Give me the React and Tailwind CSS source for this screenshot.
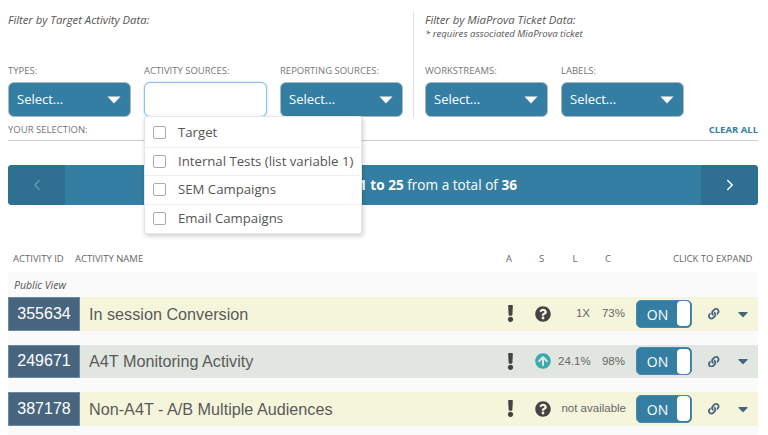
import React from "react";
import { FaExclamation, FaQuestionCircle, FaArrowCircleUp, FaLink, FaCaretDown } from "react-icons/fa";
import { ChevronLeft, ChevronRight } from "lucide-react";

const Caret = () => (
  <svg width="14" height="8" viewBox="0 0 14 8" className="block"><path d="M0.5 0.5h13L7 7.5z" fill="#fff" /></svg>
);

function Select({ label }) {
  return (
    <div className="w-[123px] shrink-0">
      <div className="h-[19px] text-[9.5px] leading-[16px] text-[#777] whitespace-nowrap">{label}</div>
      <div className="h-[35px] rounded-[6px] bg-[#357ea3] border border-[#a9b9c2] flex items-center justify-between pl-[8px] pr-[9px] text-white text-[13px]">
        <span className="pt-[1px]">Select...</span>
        <Caret />
      </div>
    </div>
  );
}

function OpenSelect({ label }) {
  return (
    <div className="w-[123px] shrink-0 relative">
      <div className="h-[19px] text-[9.5px] leading-[16px] text-[#777] whitespace-nowrap">{label}</div>
      <div className="h-[35px] rounded-[6px] bg-white border border-[#8fc0ea] shadow-[0_0_2px_rgba(90,160,220,0.6)]" />
      <div className="absolute z-10 left-0 top-[53px] w-[218px] pt-[2px] bg-white border border-[#e6e6e6] rounded-[2px] shadow-[1px_2px_5px_rgba(0,0,0,0.2)] text-[13.2px] text-[#555]">
        {["Target", "Internal Tests (list variable 1)", "SEM Campaigns", "Email Campaigns"].map((t, i) => (
          <div key={t} className={`h-[28.5px] flex items-center pl-[8px] whitespace-nowrap ${i < 3 ? "border-b border-[#efefef]" : ""}`}>
            <span className="w-[13px] h-[13px] border border-[#aaa] rounded-[2px] mr-[12px] shrink-0" />
            <span className="pt-[1px]">{t}</span>
          </div>
        ))}
      </div>
    </div>
  );
}

function Row({ id, name, bg, icon, l, c, mt = "" }) {
  return (
    <div className={`flex items-center h-[33.5px] ${bg} ${mt}`} style={{ fontFamily: '"Liberation Sans", sans-serif' }}>
      <div className="w-[72px] h-full bg-[#47657f] text-white text-[16px] flex items-center justify-center border border-[#6d8aa0]">{id}</div>
      <div className="w-[412px] pl-[9px] text-[16.2px] text-[#5a5a5a] whitespace-nowrap">{name}</div>
      <div className="w-[36px] flex justify-center"><FaExclamation className="text-[#444] text-[17px]" /></div>
      <div className="w-[30px] flex justify-center">
        {icon === "up"
          ? <FaArrowCircleUp className="text-[#3aa9b0] text-[16px]" />
          : <FaQuestionCircle className="text-[#444] text-[16px]" />}
      </div>
      {c ? (
        <>
          <div className="w-[32px] text-right text-[11.5px] text-[#666] whitespace-nowrap">{l}</div>
          <div className="w-[35px] text-right text-[11.5px] text-[#666]">{c}</div>
          <div className="w-[1px]" />
        </>
      ) : (
        <div className="w-[68px] text-right text-[11.5px] text-[#666] whitespace-nowrap">{l}</div>
      )}
      <div className="ml-[10px] w-[56px] h-[28px] rounded-[5px] bg-[#357ea3] border border-[#4d87ad] flex items-center overflow-hidden">
        <span className="flex-1 text-center text-white text-[14px] pl-[1px] pt-[1px]" style={{ fontFamily: '"Open Sans", sans-serif' }}>ON</span>
        <span className="w-[13px] h-[25px] bg-white rounded-[4px] mr-[1px]" />
      </div>
      <div className="ml-[16px] w-[12px] flex justify-center"><FaLink className="text-[#47657f] text-[11.5px]" /></div>
      <div className="ml-[16px] w-[14px] flex justify-center"><FaCaretDown className="text-[#47657f] text-[16px]" /></div>
    </div>
  );
}

export default function App() {
  return (
    <div className="relative w-[768px] h-[435px] overflow-hidden bg-white text-[#555]" style={{ fontFamily: '"Open Sans", sans-serif' }}>
      <div className="pl-[8px] pr-[10px] pt-[12px]">
        <div className="flex h-[106px]">
          <div className="w-[405px] shrink-0 flex flex-col">
            <div className="italic text-[11.25px] leading-[16px] text-[#555] h-[52px]">Filter by Target Activity Data:</div>
            <div className="flex gap-[13px] mt-[-1px]">
              <Select label="TYPES:" />
              <OpenSelect label="ACTIVITY SOURCES:" />
              <Select label="REPORTING SOURCES:" />
            </div>
          </div>
          <div className="w-px bg-[#e2e2e2] h-[106px] shrink-0" />
          <div className="pl-[11px] flex flex-col">
            <div className="h-[52px]">
              <div className="italic text-[11.25px] leading-[16px] text-[#555] whitespace-nowrap">Filter by MiaProva Ticket Data:</div>
              <div className="italic text-[9.6px] leading-[12px] text-[#555] whitespace-nowrap">* requires associated MiaProva ticket</div>
            </div>
            <div className="flex gap-[13px] mt-[-1px]">
              <Select label="WORKSTREAMS:" />
              <Select label="LABELS:" />
            </div>
          </div>
        </div>

        <div className="flex justify-between items-center h-[23px] pt-[3px] border-b border-[#ccc] text-[9.5px]">
          <span className="text-[#777]">YOUR SELECTION:</span>
          <span className="font-bold text-[#357ea3]">CLEAR ALL</span>
        </div>

        <div className="mt-[24px] h-[40px] rounded-[4px] bg-[#357ea3] flex items-center overflow-hidden text-white text-[13.6px]">
          <div className="w-[57px] h-full bg-[#2f6f91] flex items-center justify-center"><ChevronLeft size={18} strokeWidth={1.5} className="text-[#6f9cb5]" /></div>
          <div className="flex-1 pl-[294px] whitespace-nowrap"><b>1 to 25</b> from a total of <b>36</b></div>
          <div className="w-[57px] h-full bg-[#2f6f91] flex items-center justify-center"><ChevronRight size={18} strokeWidth={2} /></div>
        </div>

        <div className="mt-[44px] mb-[3px] h-[20px] flex items-center text-[9.5px] text-[#666] whitespace-nowrap">
          <span className="w-[5px]" />
          <span className="w-[62px]">ACTIVITY ID</span>
          <span className="w-[431px]">ACTIVITY NAME</span>
          <span className="w-[33px]">A</span>
          <span className="w-[33.5px]">S</span>
          <span className="w-[32.5px]">L</span>
          <span className="w-[68px]">C</span>
          <span>CLICK TO EXPAND</span>
        </div>

        <div className="bg-[#fafafa] h-[165px]">
          <div className="italic text-[10.5px] h-[25px] leading-[26px] pl-[6px] text-[#555]">Public View</div>
          <Row id="355634" name="In session Conversion" bg="bg-[#f5f5dc]" icon="q" l="1X" c="73%" />
          <Row id="249671" name="A4T Monitoring Activity" bg="bg-[#e1e6e0]" icon="up" l="24.1%" c="98%" mt="mt-[14px]" />
          <Row id="387178" name="Non-A4T - A/B Multiple Audiences" bg="bg-[#f5f5dc]" icon="q" l="not available" mt="mt-[14px]" />
        </div>
      </div>
    </div>
  );
}
